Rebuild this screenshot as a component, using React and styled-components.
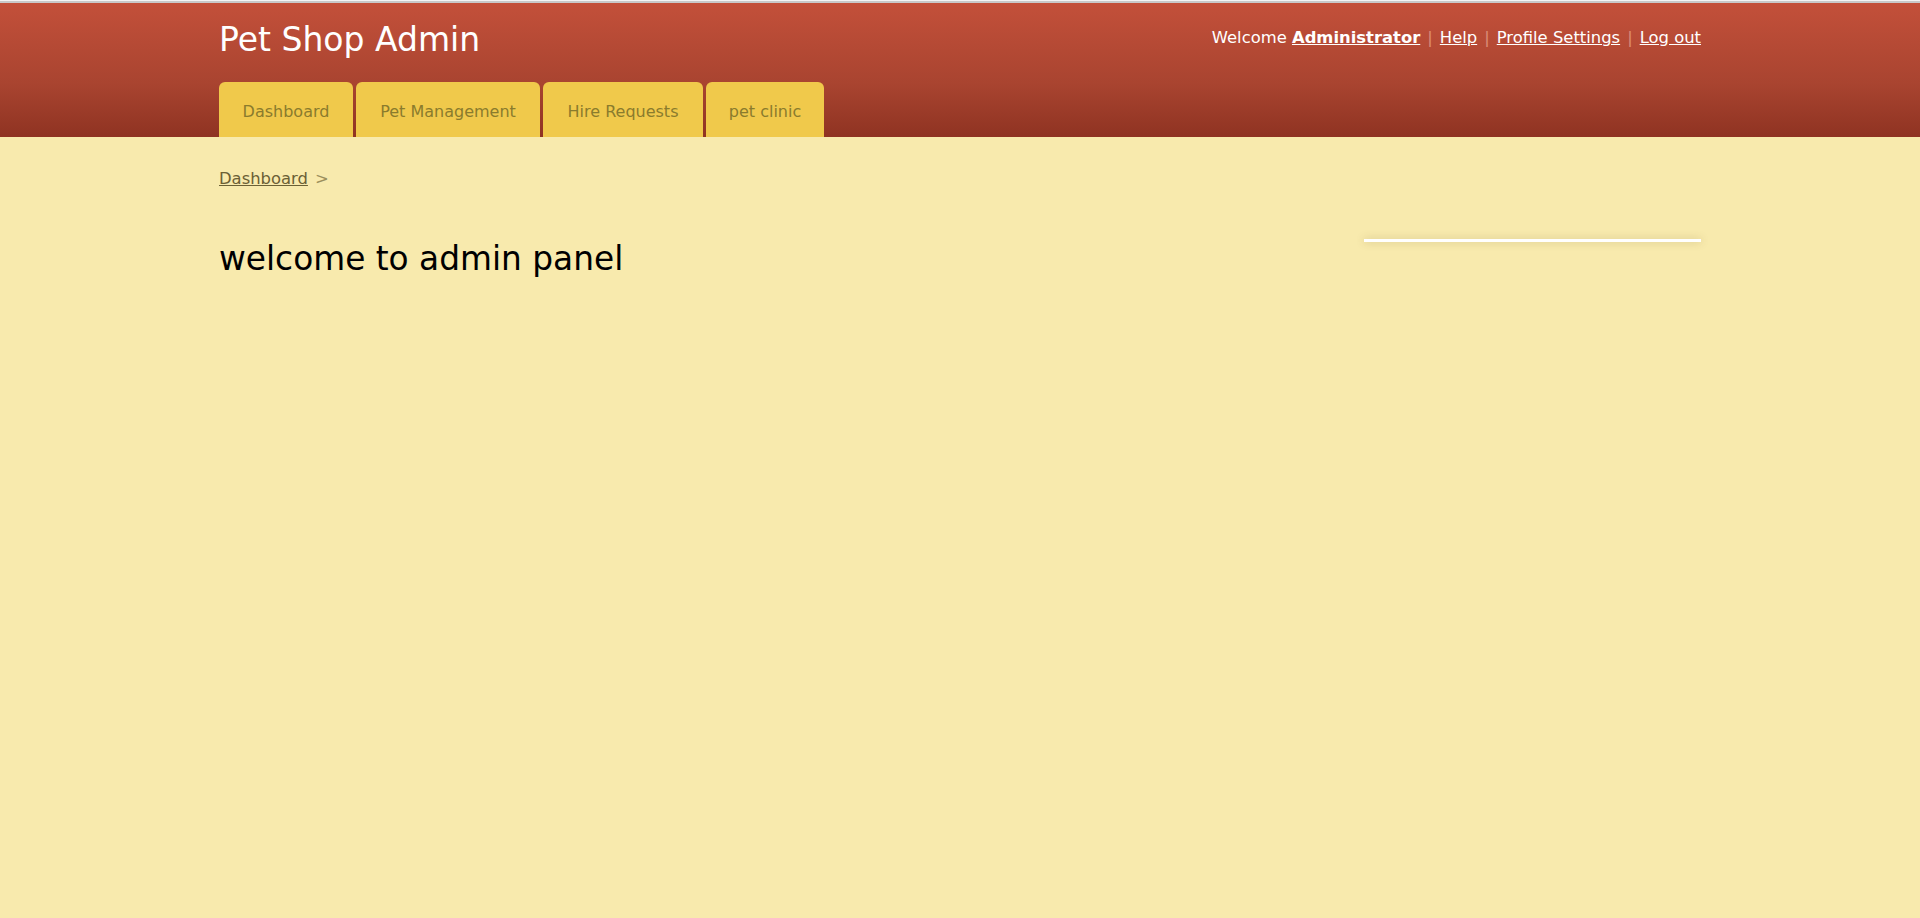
import React from 'react';
import styled, { createGlobalStyle } from 'styled-components';

const GlobalStyle = createGlobalStyle`
	html, body {
		margin: 0;
		padding: 0;
		min-height: 100%;
		background: #f8eaad;
		font-family: "DejaVu Sans", Verdana, sans-serif;
	}
`;

const Page = styled.div`
	min-height: 918px;
	background: #f8eaad;
`;

const TopStrip = styled.div`
	height: 3px;
	background: linear-gradient(#f4f4f4 0, #f4f4f4 1px, #c9c9c9 1px, #c9c9c9 3px);
`;

const Header = styled.header`
	background: linear-gradient(#c3503a, #a94430 60%, #8f3322);
`;

const Container = styled.div`
	width: 1482px;
	margin: 0 auto;
`;

const TopRow = styled.div`
	display: flex;
	justify-content: space-between;
	align-items: flex-start;
	padding-top: 19px;
`;

const Title = styled.h1`
	margin: 0;
	font-size: 33px;
	line-height: 36px;
	font-weight: normal;
	color: #ffffff;
`;

const UserNav = styled.div`
	padding-top: 6px;
	font-size: 16.4px;
	line-height: 20px;
	color: #ffffff;
`;

const NavLink = styled.a`
	color: #ffffff;
	text-decoration: underline;
	font-weight: ${(p) => (p.$bold ? 'bold' : 'normal')};
	cursor: pointer;
`;

const Sep = styled.span`
	margin: 0 7px;
	color: #dc8d78;
`;

const Tabs = styled.nav`
	display: flex;
	gap: 3px;
	margin-top: 24px;
`;

const Tab = styled.a`
	display: flex;
	align-items: center;
	justify-content: center;
	box-sizing: border-box;
	width: ${(p) => p.$w}px;
	height: 55px;
	padding-top: 4px;
	background: #f0c94b;
	border-radius: 6px 6px 0 0;
	color: #8a7b2d;
	font-size: 16px;
	line-height: 20px;
	text-decoration: none;
	cursor: pointer;
`;

const Content = styled(Container)`
	padding-top: 32px;
`;

const Breadcrumb = styled.div`
	font-size: 16.4px;
	line-height: 20px;
	color: #9b8f5c;
`;

const CrumbLink = styled.a`
	color: #6b6035;
	text-decoration: underline;
	margin-right: 7px;
	cursor: pointer;
`;

const Columns = styled.div`
	display: flex;
	align-items: flex-start;
	margin-top: 50px;
`;

const Main = styled.main`
	flex: 1;
`;

const Heading = styled.h2`
	margin: 0;
	font-size: 32.8px;
	line-height: 40px;
	font-weight: normal;
	color: #000000;
`;

const Sidebar = styled.aside`
	width: 337px;
	height: 3px;
	margin-left: 24px;
	background: #ffffff;
	box-shadow: 0 0 9px rgba(90, 70, 20, 0.28);
`;

const tabs = [
	{ label: 'Dashboard', w: 134 },
	{ label: 'Pet Management', w: 184 },
	{ label: 'Hire Requests', w: 160 },
	{ label: 'pet clinic', w: 118 }
];

export default function App() {
	return (
		<Page>
			<GlobalStyle />
			<TopStrip />
			<Header>
				<Container>
					<TopRow>
						<Title>Pet Shop Admin</Title>
						<UserNav>
							Welcome <NavLink $bold>Administrator</NavLink>
							<Sep>|</Sep>
							<NavLink>Help</NavLink>
							<Sep>|</Sep>
							<NavLink>Profile Settings</NavLink>
							<Sep>|</Sep>
							<NavLink>Log out</NavLink>
						</UserNav>
					</TopRow>
					<Tabs>
						{tabs.map((t) => (
							<Tab key={t.label} $w={t.w}>
								{t.label}
							</Tab>
						))}
					</Tabs>
				</Container>
			</Header>
			<Content>
				<Breadcrumb>
					<CrumbLink>Dashboard</CrumbLink>&gt;
				</Breadcrumb>
				<Columns>
					<Main>
						<Heading>welcome to admin panel</Heading>
					</Main>
					<Sidebar />
				</Columns>
			</Content>
		</Page>
	);
}
